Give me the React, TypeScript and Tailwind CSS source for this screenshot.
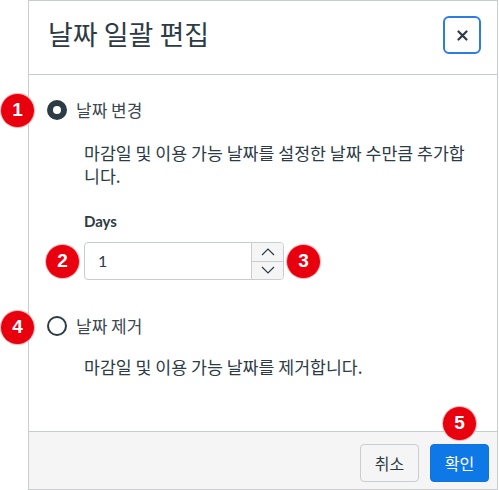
import React from "react";

const font = { fontFamily: 'Lato, "Noto Sans CJK KR", sans-serif' };
const kr = { fontFamily: '"Noto Sans CJK KR", sans-serif' };

function Badge({ n, className }: { n: number; className: string }) {
  return (
    <div
      className={`absolute flex h-[33px] w-[33px] items-center justify-center rounded-full bg-[#e8000e] text-[19px] font-bold text-white ring-1 ring-[#f5b5b5] ${className}`}
      style={{ fontFamily: '"Liberation Sans", Arial, sans-serif' }}
    >
      {n}
    </div>
  );
}

export default function App() {
  return (
    <div className="relative h-[490px] w-[499px] bg-white text-[#2d3b45]" style={font}>
      <div className="ml-[28px] flex h-[490px] w-[470px] flex-col border border-[#c7cdd1] bg-white">
        {/* Header */}
        <div className="flex h-[74px] shrink-0 items-start justify-between border-b border-[#c7cdd1] pl-[19px] pr-[16px] pt-[15px]">
          <h1 className="pt-[1px] text-[27px] font-normal leading-[34px] text-[#2d3b45]" style={kr}>
            날짜 일괄 편집
          </h1>
          <button className="flex h-[38px] w-[38px] items-center justify-center rounded-[6px] border-2 border-[#2b7de1] bg-white">
            <svg width="11" height="11" viewBox="0 0 11 11">
              <path d="M1.5 1.5 L9.5 9.5 M9.5 1.5 L1.5 9.5" stroke="#2d3b45" strokeWidth="2.2" strokeLinecap="round" />
            </svg>
          </button>
        </div>

        {/* Body */}
        <div className="flex-1 pl-[18px] pr-[16px] pt-[25px]">
          <div className="flex h-5 items-center gap-[9px]">
            <span className="flex h-5 w-5 items-center justify-center rounded-full bg-[#2d3b45]">
              <span className="h-[8px] w-[8px] rounded-full bg-white" />
            </span>
            <span className="text-[17px] leading-5 text-[#3b4852]" style={kr}>날짜 변경</span>
          </div>
          <p className="ml-[37px] mt-[21px] text-[17.3px] leading-[23px] text-[#2d3b45]" style={kr}>
            마감일 및 이용 가능 날짜를 설정한 날짜 수만큼 추가합
            <br />
            니다.
          </p>
          <div className="ml-[37px] mt-[24px] text-[15px] font-bold leading-5 text-[#2d3b45]">Days</div>
          <div className="ml-[37px] mt-[11px] flex h-[38px] w-[200px] overflow-hidden rounded-[4px] border border-[#c7cdd1]">
            <div className="flex flex-1 items-center pl-[13px] text-[16px] text-[#2d3b45]">1</div>
            <div className="flex w-[32px] flex-col border-l border-[#c7cdd1] bg-[#f5f5f5]">
              <div className="flex flex-1 items-center justify-center border-b border-[#c7cdd1]">
                <svg width="14" height="8" viewBox="0 0 14 8">
                  <path d="M1 7 L7 1 L13 7" fill="none" stroke="#2d3b45" strokeWidth="1.2" />
                </svg>
              </div>
              <div className="flex flex-1 items-center justify-center">
                <svg width="14" height="8" viewBox="0 0 14 8">
                  <path d="M1 1 L7 7 L13 1" fill="none" stroke="#2d3b45" strokeWidth="1.2" />
                </svg>
              </div>
            </div>
          </div>
          <div className="mt-[36px] flex h-5 items-center gap-[9px]">
            <span className="h-5 w-5 rounded-full border-2 border-[#2d3b45] bg-white" />
            <span className="text-[17px] leading-5 text-[#3b4852]" style={kr}>날짜 제거</span>
          </div>
          <p className="ml-[37px] mt-[19px] text-[17.3px] leading-[23px] text-[#2d3b45]" style={kr}>
            마감일 및 이용 가능 날짜를 제거합니다.
          </p>
        </div>

        {/* Footer */}
        <div className="flex shrink-0 justify-end gap-[11px] border-t border-[#c7cdd1] bg-[#f5f5f5] pb-[7px] pr-[8px] pt-[12px]">
          <button className="h-[38px] w-[59px] rounded-[4px] border border-[#c7cdd1] bg-[#f5f5f5] text-[16px] text-[#2d3b45]" style={kr}>
            취소
          </button>
          <button className="h-[38px] w-[59px] rounded-[4px] border border-[#0e74de] bg-[#0e78e6] text-[16px] text-white" style={kr}>
            확인
          </button>
        </div>
      </div>

      <Badge n={1} className="left-[1px] top-[94px]" />
      <Badge n={2} className="left-[46px] top-[245px]" />
      <Badge n={3} className="left-[287px] top-[245px]" />
      <Badge n={4} className="left-[1px] top-[311px]" />
      <Badge n={5} className="left-[443px] top-[407px]" />
    </div>
  );
}
